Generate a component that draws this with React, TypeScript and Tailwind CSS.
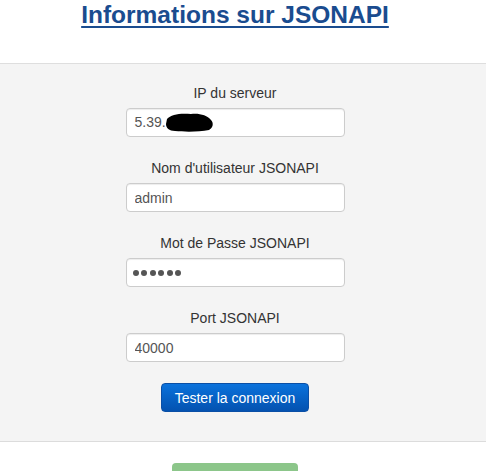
import { useState } from "react";

const font = { fontFamily: '"Liberation Sans", Arial, sans-serif' };

function Field({
  label,
  children,
}: {
  label: string;
  children: React.ReactNode;
}) {
  return (
    <div className="flex flex-col items-center">
      <label className="text-[14px] leading-[20px] text-[#333] mb-[5px]">{label}</label>
      {children}
    </div>
  );
}

const inputCls =
  "w-[219px] h-[29px] px-[8px] bg-white border border-[#ccc] rounded-[4px] text-[14px] text-[#555] shadow-[inset_0_1px_1px_rgba(0,0,0,0.075)] outline-none";

export default function App() {
  const [user, setUser] = useState("admin");
  const [port, setPort] = useState("40000");

  return (
    <div className="w-[486px] h-[471px] bg-white overflow-hidden" style={font}>
      <div className="h-[64px] border-b border-[#dedede]">
        <div className="w-[470px] flex justify-center">
          <h1 className="text-[24.5px] leading-[30px] font-bold text-[#1a4c8f] underline decoration-2 underline-offset-[3px]">
            Informations sur JSONAPI
          </h1>
        </div>
      </div>

      <div className="bg-[#f4f4f4] border-b border-[#dcdcdc] pt-[19px] pb-[29px]">
        <div className="w-[470px] flex flex-col items-center gap-[21px]">
          <Field label="IP du serveur">
            <div className={inputCls + " relative flex items-center"}>
              <span>5.39.</span>
              <svg className="absolute left-[38px] top-[2px]" width="50" height="22" viewBox="0 0 50 22">
                <path
                  d="M2 8 C6 3 16 2 26 3 C34 2 42 4 46 9 C49 12 48 17 44 19 C34 21 20 21 10 20 C4 20 1 17 1 13 Z"
                  fill="#000"
                />
              </svg>
            </div>
          </Field>
          <Field label="Nom d'utilisateur JSONAPI">
            <input className={inputCls} value={user} onChange={(e) => setUser(e.target.value)} />
          </Field>
          <Field label="Mot de Passe JSONAPI">
            <div className={inputCls + " flex items-center gap-[2.5px] pl-[6px]"}>
              {[0, 1, 2, 3, 4, 5].map((i) => (
                <span key={i} className="w-[6px] h-[6px] rounded-full bg-[#555]" />
              ))}
            </div>
          </Field>
          <Field label="Port JSONAPI">
            <input className={inputCls} value={port} onChange={(e) => setPort(e.target.value)} />
          </Field>
          <button className="h-[29px] px-[13px] rounded-[4px] border border-[#0a4fa6] bg-gradient-to-b from-[#0b72dc] to-[#0452b0] text-white text-[14px] leading-[20px]">
            Tester la connexion
          </button>
        </div>
      </div>

      <div className="w-[470px] flex justify-center pt-[21px]">
        <div className="w-[126px] h-[30px] rounded-[4px] bg-[#8cc68a]" />
      </div>
    </div>
  );
}
